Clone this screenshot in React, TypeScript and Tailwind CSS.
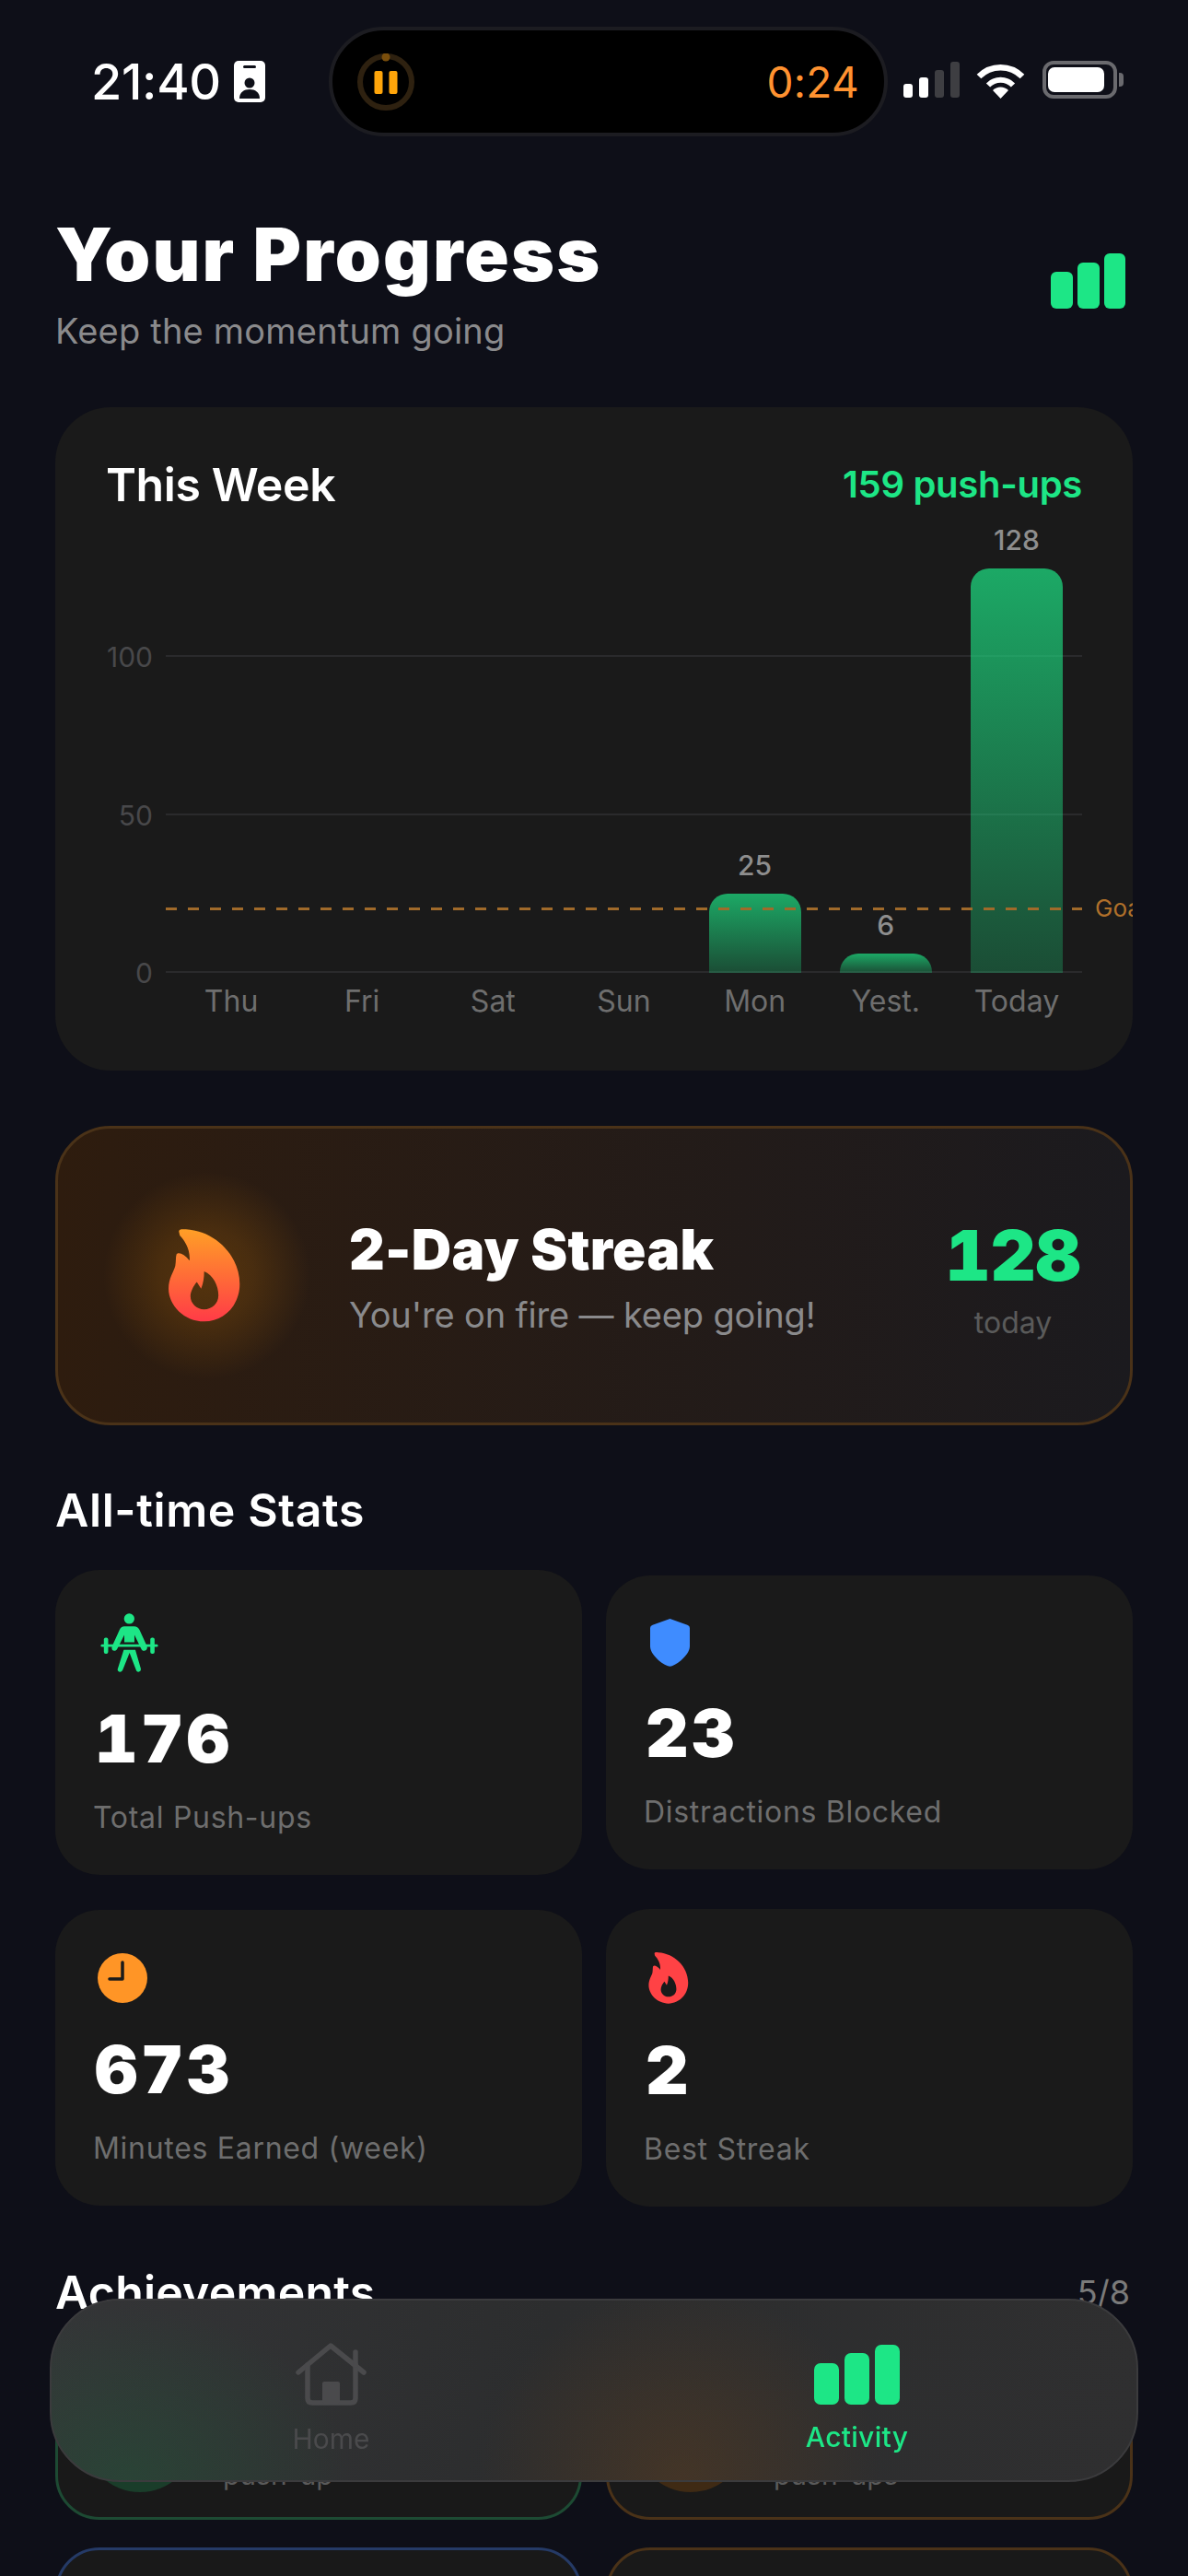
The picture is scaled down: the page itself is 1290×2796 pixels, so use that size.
const FLAME_OUTER =
	"M222 112C222 104 232 104 245 105C340 110 422 190 422 285C422 355 370 408 305 408C240 408 188 355 188 300C188 265 205 245 210 225C213 210 211 195 214 187C220 178 240 185 257 208C260 170 240 140 225 125Z";
const FLAME_INNER =
	"M305 243C335 255 352 290 352 322C352 350 330 368 305 368C280 368 260 348 260 325C260 310 270 290 281 278L295 300C303 280 305 262 305 243Z";

const UNIT = 3.43;

const days = [
	{ label: "Thu", value: 0 },
	{ label: "Fri", value: 0 },
	{ label: "Sat", value: 0 },
	{ label: "Sun", value: 0 },
	{ label: "Mon", value: 25 },
	{ label: "Yest.", value: 6 },
	{ label: "Today", value: 128 },
];

function BarsIcon({ className }: { className: string }) {
	return (
		<svg viewBox="0 0 93 65" className={className} fill="#1de686">
			<rect x="0" y="20" width="27" height="45" rx="7" />
			<rect x="33" y="9" width="27" height="56" rx="7" />
			<rect x="66" y="0" width="27" height="65" rx="7" />
		</svg>
	);
}

function StatusBar() {
	return (
		<div className="flex items-center pt-[29px] pl-[99px]">
			<div className="flex w-[258px] items-center">
				<span className="w-[155px] text-[54px] leading-[60px] font-medium tracking-[-0.3px] text-white">21:40</span>
				<svg viewBox="0 0 34 45" className="h-[45px] w-[34px]">
					<rect width="34" height="45" rx="5" fill="#fff" />
					<rect x="10" y="5" width="14" height="3" rx="1.5" fill="#0e0f18" />
					<circle cx="17" cy="24" r="5.5" fill="#0e0f18" />
					<path d="M6 41C6 34 11 31 17 31C23 31 28 34 28 41Z" fill="#0e0f18" />
				</svg>
			</div>
			<div className="flex h-[119px] w-[607px] items-center justify-between rounded-full border-4 border-[#1c1c21] bg-black px-[27px]">
				<svg viewBox="0 0 62 62" className="h-[62px] w-[62px]">
					<circle cx="31" cy="31" r="28" fill="none" stroke="#2e2110" strokeWidth="6" />
					<circle cx="31" cy="4" r="4.5" fill="#7a4e0c" />
					<rect x="18.5" y="19" width="9" height="25" rx="2" fill="#ffa50a" />
					<rect x="34.5" y="19" width="9" height="25" rx="2" fill="#ffa50a" />
				</svg>
				<span className="text-[46px] leading-[56px] font-normal tracking-[0.3px] text-[#ff9230]">0:24</span>
			</div>
			<div className="mb-[4px] ml-[17px] flex items-center">
				<div className="flex h-[39px] items-end gap-[7px]">
					<div className="h-[15px] w-[10px] rounded-[3px] bg-white" />
					<div className="h-[22px] w-[10px] rounded-[3px] bg-white" />
					<div className="h-[30px] w-[10px] rounded-[3px] bg-[#3e3e42]" />
					<div className="h-[39px] w-[10px] rounded-[3px] bg-[#3e3e42]" />
				</div>
				<svg viewBox="0 0 53 40" className="ml-[18px] h-[40px] w-[53px]">
					<path d="M3 16A33 33 0 0 1 50 16" fill="none" stroke="#fff" strokeWidth="6.5" />
					<path d="M13 25.5A19 19 0 0 1 40 25.5" fill="none" stroke="#fff" strokeWidth="6" />
					<path d="M26.5 40L18 31A12 12 0 0 1 35 31Z" fill="#fff" />
				</svg>
				<div className="ml-[19px] flex h-[41px] w-[81px] items-center rounded-[12px] border-4 border-[#6a6a6e] px-[2px]">
					<div className="h-[27px] w-[61px] rounded-[7px] bg-white" />
				</div>
				<div className="ml-[2px] h-[15px] w-[5px] rounded-r-[4px] bg-[#6a6a6e]" />
			</div>
		</div>
	);
}

function Header() {
	return (
		<div className="mt-[80px] flex items-center justify-between pr-[8px]">
			<div>
				<h1 className="text-[80px] leading-[96px] font-black tracking-[2.2px] text-white">Your Progress</h1>
				<p className="mt-[12px] text-[38px] leading-[46px] tracking-[0.2px] text-[#8a8a8c]">Keep the momentum going</p>
			</div>
			<svg viewBox="0 0 81 60" className="h-[60px] w-[81px]" fill="#1de686">
				<rect x="0" y="20" width="24" height="40" rx="6" />
				<rect x="29" y="10" width="24" height="50" rx="6" />
				<rect x="58" y="0" width="23" height="60" rx="6" />
			</svg>
		</div>
	);
}

function WeekChart() {
	return (
		<section className="mt-[60px] h-[720px] overflow-hidden rounded-[60px] bg-[#1a1a1a] px-[55px] pt-[54px]">
			<div className="flex items-center justify-between">
				<h2 className="text-[50px] leading-[60px] font-semibold tracking-[-0.4px] text-white">This Week</h2>
				<span className="text-[40px] leading-[60px] font-semibold tracking-[-0.3px] text-[#1de686]">159 push-ups</span>
			</div>
			<div className="relative ml-[65px] h-[500px]">
				{[100, 50, 0].map((tick) => (
					<div key={tick} className="absolute right-0 left-0 h-[2px] bg-[#2a2a2c]" style={{ bottom: tick * UNIT }}>
						<span className="absolute top-[-13px] right-full mr-[14px] text-[30px] leading-[30px] text-[#48484a]">
							{tick}
						</span>
					</div>
				))}
				<div className="relative flex h-full">
					{days.map((day) => (
						<div key={day.label} className="flex flex-1 flex-col items-center justify-end">
							{day.value > 0 && (
								<>
									<span className="mb-[16px] text-[30px] leading-[30px] font-medium text-[#8e8e8e]">{day.value}</span>
									<div
										className="w-[100px] rounded-t-[20px] bg-gradient-to-b from-[#1de686]/70 to-[#1de686]/25"
										style={{ height: day.value * UNIT }}
									/>
								</>
							)}
						</div>
					))}
				</div>
				<div
					className="absolute right-0 left-0 h-[3px] bg-[repeating-linear-gradient(90deg,#a06a2a_0_12px,transparent_12px_24px)]"
					style={{ bottom: 20 * UNIT - 1 }}
				>
					<span className="absolute top-[-15px] left-full ml-[14px] text-[26px] leading-[32px] whitespace-nowrap text-[#b0702a]">
						Goal
					</span>
				</div>
			</div>
			<div className="mt-[11px] ml-[65px] flex">
				{days.map((day) => (
					<span key={day.label} className="flex-1 text-center text-[32px] leading-[40px] text-[#6e6e6e]">
						{day.label}
					</span>
				))}
			</div>
		</section>
	);
}

function StreakCard() {
	return (
		<section className="relative mt-[60px] flex h-[325px] items-center overflow-hidden rounded-[60px] border-[3px] border-[#4a3218] bg-gradient-to-r from-[#2e1c0e] to-[#1b1a1e] pl-[120px]">
			<div className="absolute top-[47px] left-[49px] h-[225px] w-[225px] rounded-full bg-[radial-gradient(circle_closest-side,rgba(255,149,0,0.2)_0%,rgba(255,149,0,0.14)_45%,rgba(255,149,0,0)_100%)]" />
			<svg viewBox="188 104 236 306" className="relative h-[101px] w-[78px]">
				<defs>
					<linearGradient id="flame" x1="0" y1="0" x2="0" y2="1">
						<stop offset="0" stopColor="#ff9f26" />
						<stop offset="1" stopColor="#ff3b47" />
					</linearGradient>
				</defs>
				<path d={`${FLAME_OUTER}${FLAME_INNER}`} fill="url(#flame)" fillRule="evenodd" />
			</svg>
			<div className="relative ml-[118px]">
				<h2 className="text-[60px] leading-[72px] font-black tracking-[0.3px] text-white">2-Day Streak</h2>
				<p className="mt-[12px] text-[38px] leading-[46px] tracking-[-0.15px] text-[#8a8a8c]">You're on fire — keep going!</p>
			</div>
			<div className="relative mr-[27px] ml-auto w-[200px] pt-[6px] text-center">
				<div className="text-[76px] leading-[88px] font-black tabular-nums text-[#1de686]">128</div>
				<div className="mt-[8px] text-[32px] leading-[44px] text-[#5a5a5a]">today</div>
			</div>
		</section>
	);
}

function StatCard({ icon, value, label }: { icon: React.ReactNode; value: string; label: string }) {
	return (
		<div className="w-[572px] rounded-[48px] bg-[#1a1a1a] pt-[47px] pr-[40px] pb-[42px] pl-[41px]">
			{icon}
			<div className="mt-[32px] ml-[2px] text-[72px] leading-[80px] font-black tracking-[3.5px] tabular-nums text-white">{value}</div>
			<div className="mt-[26px] text-[32px] leading-[40px] tracking-[0.7px] text-[#6e6e6e]">{label}</div>
		</div>
	);
}

function LifterIcon() {
	return (
		<svg viewBox="88 62 187 193" className="ml-[8px] h-[64px] w-[63px]" fill="#1de686">
			<circle cx="181" cy="80" r="17" />
			<path d="M165 105H197C205 105 211 109 215 117L239 170C242 178 236 186 229 185C225 185 222 182 220 178L198 133V157H165V133L142 178C140 182 136 185 132 185C125 185 122 178 125 170L149 117C152 109 158 105 165 105Z" />
			<path d="M163 182H201L219 244C220 250 216 254 211 254C207 254 204 251 203 247L182 192L160 247C158 251 155 254 151 254C146 254 142 250 143 245Z" />
			<rect x="88" y="164" width="187" height="8" rx="4" />
			<rect x="98" y="142" width="14" height="53" rx="6" />
			<rect x="250" y="142" width="14" height="53" rx="6" />
		</svg>
	);
}

function ShieldIcon() {
	return (
		<svg viewBox="78 50 130 157" className="ml-[7px] h-[52px] w-[43px]" fill="#3f8cff">
			<path d="M143 50L200 70Q208 73 208 80V140C208 165 175 195 150 205Q143 208 136 205C110 195 78 165 78 140V80Q78 73 86 70Z" />
		</svg>
	);
}

function ClockIcon() {
	return (
		<svg viewBox="0 0 54 54" className="ml-[5px] h-[54px] w-[54px]">
			<circle cx="27" cy="27" r="27" fill="#ff9526" />
			<path d="M27 10V28H13" fill="none" stroke="#1a1a1a" strokeWidth="3.5" strokeLinecap="round" strokeLinejoin="round" />
		</svg>
	);
}

function SmallFlame() {
	return (
		<svg viewBox="188 104 236 306" className="ml-[5px] h-[56px] w-[44px]">
			<path d={`${FLAME_OUTER}${FLAME_INNER}`} fill="#ff4245" fillRule="evenodd" />
		</svg>
	);
}

function AchievementCard({
	border,
	circle,
	title,
	lines,
}: {
	border: string;
	circle: string;
	title: string;
	lines: string[];
}) {
	return (
		<div className={`flex h-[185px] w-[572px] items-center rounded-[48px] border-[3px] bg-[#191919] pl-[29px] ${border}`}>
			<div className={`mt-[4px] h-[120px] w-[120px] shrink-0 rounded-full ${circle}`} />
			<div className="ml-[30px] pt-[6px]">
				<div className="text-[32px] leading-[44px] font-semibold text-white">{title}</div>
				{lines.map((line) => (
					<div key={line} className="text-[30px] leading-[36px] text-[#5a5a5a]">
						{line}
					</div>
				))}
			</div>
		</div>
	);
}

function NavBar() {
	return (
		<nav className="absolute top-[2495px] left-[54px] grid h-[199px] w-[1182px] grid-cols-2 rounded-[76px] border-2 border-[#3b3b3d] bg-[radial-gradient(ellipse_240px_190px_at_7%_100%,rgba(35,80,55,0.55),transparent),radial-gradient(ellipse_220px_210px_at_58%_100%,rgba(95,62,30,0.45),transparent),linear-gradient(100deg,#343537,#2c2d2e_45%,#2f2f30_100%)] px-[18px] backdrop-blur-[40px]">
			<div className="flex flex-col items-center pt-[46px]">
				<svg viewBox="0 0 77 68" className="h-[68px] w-[77px]" fill="none" stroke="#4a4a4c" strokeWidth="5.5" strokeLinecap="round" strokeLinejoin="round">
					<path d="M3 32L38 3L74 32" />
					<path d="M13 24V60Q13 65 18 65H60Q65 65 65 60V24" />
					<path d="M65 10V24" />
					<rect x="29" y="42" width="19" height="24" rx="2" fill="#4a4a4c" stroke="none" />
				</svg>
				<span className="mt-[16px] text-[30px] leading-[40px] text-[#4a4a4c]">Home</span>
			</div>
			<div className="flex flex-col items-center pt-[48px]">
				<BarsIcon className="h-[65px] w-[93px]" />
				<span className="mt-[15px] text-[30px] leading-[40px] font-medium tracking-[0.3px] text-[#1de686]">Activity</span>
			</div>
		</nav>
	);
}

export default function App() {
	return (
		<div className="relative h-[2796px] w-[1290px] overflow-hidden bg-[#0e0f18] [font-family:Inter,sans-serif]">
			<StatusBar />
			<main className="px-[60px]">
				<Header />
				<WeekChart />
				<StreakCard />
				<h2 className="mt-[62px] text-[50px] leading-[60px] font-semibold tracking-[0.6px] text-white">All-time Stats</h2>
				<div className="mt-[35px] flex items-center gap-[26px]">
					<StatCard icon={<LifterIcon />} value="176" label="Total Push-ups" />
					<StatCard icon={<ShieldIcon />} value="23" label="Distractions Blocked" />
				</div>
				<div className="mt-[37px] flex items-center gap-[26px]">
					<StatCard icon={<ClockIcon />} value="673" label="Minutes Earned (week)" />
					<StatCard icon={<SmallFlame />} value="2" label="Best Streak" />
				</div>
				<div className="mt-[63px] flex items-center justify-between">
					<h2 className="text-[50px] leading-[60px] font-semibold tracking-[0.2px] text-white">Achievements</h2>
					<span className="pr-[3px] text-[36px] leading-[60px] text-[#7a7a7a]">5/8</span>
				</div>
				<div className="mt-[32px] flex gap-[26px]">
					<AchievementCard border="border-[#1d4a33]" circle="bg-[#1a3d2a]" title="First Rep" lines={["Complete your first", "push-up"]} />
					<AchievementCard border="border-[#4a3218]" circle="bg-[#3f2a14]" title="Century" lines={["Complete 100", "push-ups"]} />
				</div>
				<div className="mt-[30px] flex gap-[26px]">
					<AchievementCard border="border-[#253a66]" circle="bg-[#1a2740]" title="Focused" lines={["Block 10", "distractions"]} />
					<AchievementCard border="border-[#4a3218]" circle="bg-[#3f2a14]" title="On Fire" lines={["Keep a 3-day", "streak"]} />
				</div>
			</main>
			<NavBar />
		</div>
	);
}
